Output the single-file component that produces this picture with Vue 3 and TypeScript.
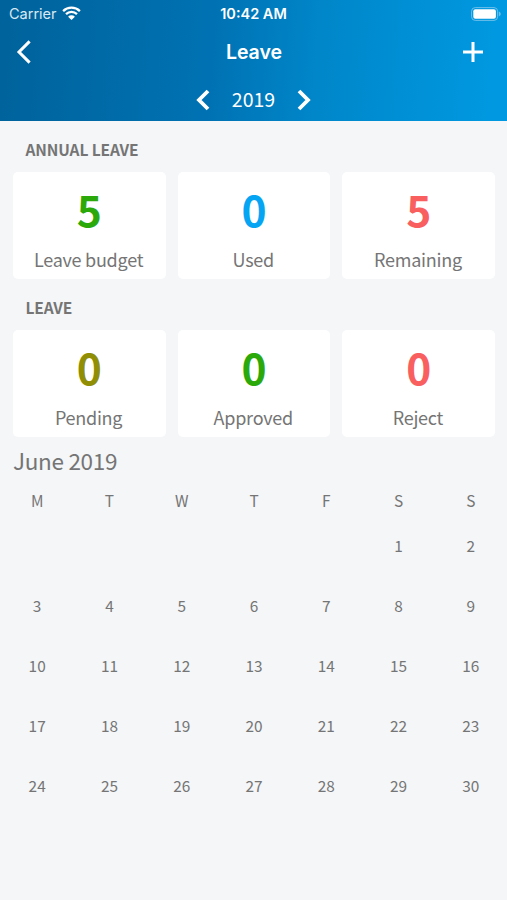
<script setup lang="ts">
interface Stat {
  label: string
  value: number
  tone: string
}

interface Section {
  title: string
  stats: Stat[]
}

const year = 2019

const sections: Section[] = [
  {
    title: 'ANNUAL LEAVE',
    stats: [
      { label: 'Leave budget', value: 5, tone: 'green' },
      { label: 'Used', value: 0, tone: 'blue' },
      { label: 'Remaining', value: 5, tone: 'red' },
    ],
  },
  {
    title: 'LEAVE',
    stats: [
      { label: 'Pending', value: 0, tone: 'olive' },
      { label: 'Approved', value: 0, tone: 'green' },
      { label: 'Reject', value: 0, tone: 'red' },
    ],
  },
]

const weekdays = ['M', 'T', 'W', 'T', 'F', 'S', 'S']

// June 2019 starts on a Saturday: five empty cells precede the first day.
const cells: (number | null)[] = [
  ...Array<null>(5).fill(null),
  ...Array.from({ length: 30 }, (_, i) => i + 1),
]
</script>

<template>
  <main class="screen">
    <header class="header">
      <div class="status">
        <div class="carrier">
          <span>Carrier</span>
          <svg class="wifi" viewBox="0 0 18 14" width="19" height="14.5">
            <path d="M0.9 4.9a11.6 11.6 0 0 1 16.2 0" />
            <path d="M3.7 7.8a7.6 7.6 0 0 1 10.6 0" />
            <path class="dot" d="M9 13.6L5.7 10.3a4.7 4.7 0 0 1 6.6 0z" />
          </svg>
        </div>
        <span class="time">10:42 AM</span>
        <svg class="battery" viewBox="0 0 30 14" width="30" height="14">
          <rect class="shell" x="0.6" y="0.6" width="26" height="12.8" rx="3.6" />
          <rect class="charge" x="2.3" y="2.3" width="22.6" height="9.4" rx="2" />
          <path class="tip" d="M27.8 4.6c1.5.7 1.9 1.5 1.9 2.4s-.4 1.7-1.9 2.4z" />
        </svg>
      </div>

      <div class="nav">
        <button class="icon-button" aria-label="Back">
          <svg viewBox="0 0 16 24" width="16" height="24">
            <path d="M13.6 1.4L3 12l10.6 10.6" />
          </svg>
        </button>
        <h1>Leave</h1>
        <button class="icon-button" aria-label="Add">
          <svg viewBox="0 0 20 20" width="20" height="20">
            <path d="M10 0v20M0 10h20" />
          </svg>
        </button>
      </div>

      <div class="year">
        <button class="icon-button" aria-label="Previous year">
          <svg viewBox="0 0 14 22" width="14" height="22">
            <path d="M12 2L3 11l9 9" />
          </svg>
        </button>
        <span>{{ year }}</span>
        <button class="icon-button" aria-label="Next year">
          <svg viewBox="0 0 14 22" width="14" height="22">
            <path d="M2 2L11 11l-9 9" />
          </svg>
        </button>
      </div>
    </header>

    <section v-for="section in sections" :key="section.title" class="section">
      <h2>{{ section.title }}</h2>
      <div class="cards">
        <div v-for="stat in section.stats" :key="stat.label" class="card">
          <strong :class="stat.tone">{{ stat.value }}</strong>
          <span>{{ stat.label }}</span>
        </div>
      </div>
    </section>

    <section class="calendar">
      <h3>June {{ year }}</h3>
      <div class="weekdays">
        <span v-for="(day, i) in weekdays" :key="i">{{ day }}</span>
      </div>
      <div class="days">
        <span v-for="(cell, i) in cells" :key="i">{{ cell ?? '' }}</span>
      </div>
    </section>
  </main>
</template>

<style>
body {
  margin: 0;
  background: #f4f6f8;
}
</style>

<style scoped>
.screen {
  min-height: 900px;
  background: #f4f6f8;
  color: #757575;
  font-family: 'Noto Sans CJK JP', 'Noto Sans', sans-serif;
}

.header {
  box-sizing: border-box;
  height: 121px;
  background: linear-gradient(94deg, #00639c 2%, #0072b3 42%, #0086c9 62%, #0099e1 98%);
  color: #fff;
}

.status,
.nav {
  display: grid;
  grid-template-columns: 1fr auto 1fr;
  align-items: center;
}

.status {
  height: 27px;
  padding: 0 6px 0 9px;
  font-family: Inter, sans-serif;
  font-size: 14.5px;
}

.carrier {
  display: flex;
  align-items: center;
  gap: 5px;
  color: #d9e9f3;
}

.wifi {
  fill: none;
  stroke: #fff;
  stroke-width: 2.2;
}

.wifi .dot {
  fill: #fff;
  stroke: none;
}

.time {
  margin-left: -3px;
  font-weight: 600;
}

.battery {
  justify-self: end;
}

.shell {
  fill: none;
  stroke: #6dbfe9;
  stroke-width: 1;
}

.charge {
  fill: #fff;
}

.tip {
  fill: #6dbfe9;
}

.nav {
  height: 50px;
  padding: 0 24px 0 25px;
}

h1,
h2,
h3 {
  margin: 0;
}

h1 {
  font: 600 19.5px/28px Inter, sans-serif;
}

.icon-button {
  display: flex;
  padding: 0;
  border: 0;
  background: none;
  color: inherit;
}

.icon-button svg {
  fill: none;
  stroke: currentColor;
  stroke-width: 3;
}

.nav .icon-button:first-child {
  margin-left: -9px;
}

.nav .icon-button:last-child {
  justify-self: end;
}

.year {
  display: flex;
  align-items: center;
  justify-content: center;
  gap: 22px;
  height: 45px;
  font-size: 19.5px;
  line-height: 30px;
}

.year span {
  padding-bottom: 2px;
}

.year .icon-button svg {
  stroke-width: 3.8;
}

.section {
  padding: 0 12px 0 13px;
}

h2 {
  height: 51px;
  padding-left: 12.5px;
  font-size: 15.5px;
  font-weight: 700;
  letter-spacing: -0.1px;
  line-height: 57px;
}

.cards {
  display: grid;
  grid-template-columns: repeat(3, 1fr);
  gap: 12px;
}

.card {
  display: flex;
  flex-direction: column;
  align-items: center;
  height: 107px;
  border-radius: 5px;
  background: #fff;
}

.card strong {
  height: 74px;
  font-size: 42.5px;
  font-weight: 700;
  line-height: 74px;
}

.card span {
  padding-right: 1.5px;
  font-size: 18px;
  letter-spacing: -0.25px;
  line-height: 26px;
}

.green {
  color: #2ba90b;
}

.blue {
  color: #06a5f3;
}

.red {
  color: #f95f5f;
}

.olive {
  color: #908e04;
}

h3 {
  padding-left: 13px;
  font-size: 22.5px;
  font-weight: 400;
  letter-spacing: -0.3px;
  line-height: 46px;
}

.weekdays,
.days {
  display: grid;
  grid-template-columns: repeat(7, 1fr);
  padding-left: 1px;
  text-align: center;
  font-size: 15.4px;
}

.weekdays {
  height: 34px;
  line-height: 35px;
}

.days {
  grid-auto-rows: 60px;
  line-height: 57px;
}
</style>
